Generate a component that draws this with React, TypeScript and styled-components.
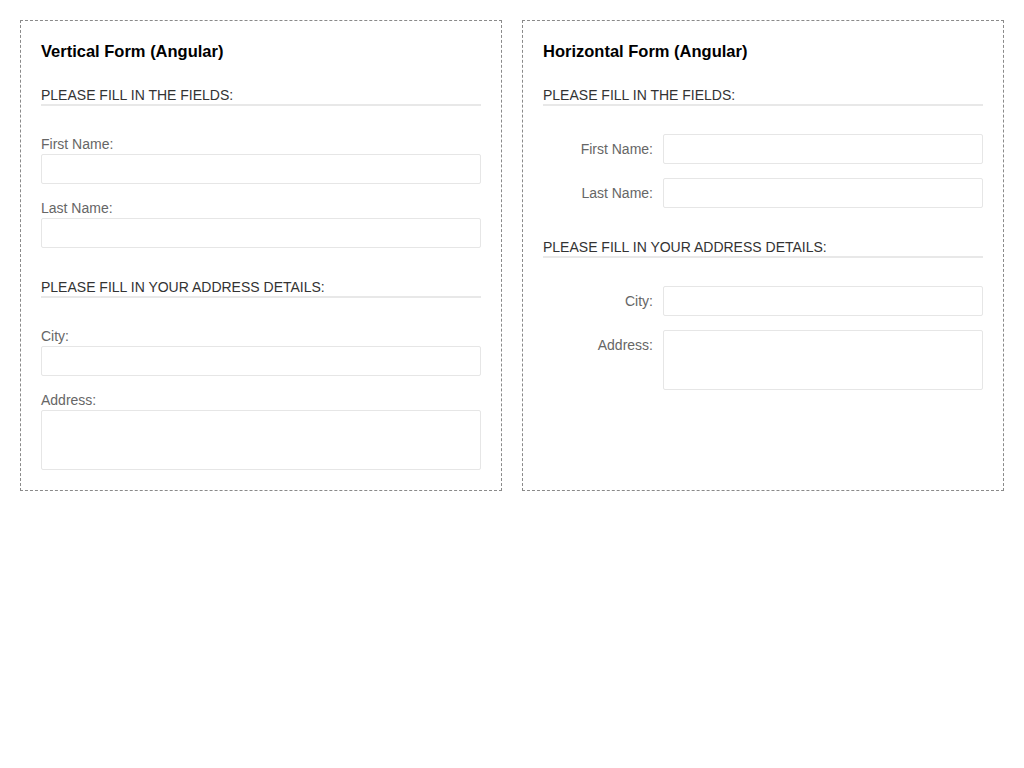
import React from "react";
import styled, { createGlobalStyle } from "styled-components";

const Global = createGlobalStyle`
  html, body { margin: 0; padding: 0; background: #fff; }
  body { font-family: "Liberation Sans", Arial, sans-serif; }
  * { box-sizing: border-box; }
`;

const Page = styled.div`
  display: flex;
  gap: 20px;
  padding: 20px;
  align-items: stretch;
`;

const Panel = styled.section`
  flex: 1 1 0;
  border: 1px dashed #8a8a8a;
  padding: 20px;
`;

const Title = styled.h3`
  margin: 0 0 25px;
  font-size: 16.5px;
  line-height: 20px;
  font-weight: bold;
  color: #000;
`;

const SectionHead = styled.div<{ $first?: boolean }>`
  margin-top: ${(p) => (p.$first ? "0" : "30px")};
  font-size: 14px;
  line-height: 18px;
  color: #333;
  border-bottom: 2px solid #e8e8e8;
`;

const Fields = styled.div<{ $horizontal?: boolean }>`
  margin-top: ${(p) => (p.$horizontal ? "28px" : "29px")};
  display: flex;
  flex-direction: column;
  gap: ${(p) => (p.$horizontal ? "14px" : "15px")};
`;

const Group = styled.div<{ $horizontal?: boolean }>`
  display: flex;
  flex-direction: ${(p) => (p.$horizontal ? "row" : "column")};
  gap: ${(p) => (p.$horizontal ? "10px" : "0")};
  align-items: ${(p) => (p.$horizontal ? "flex-start" : "stretch")};
`;

const Label = styled.label<{ $horizontal?: boolean }>`
  font-size: 14px;
  color: #666;
  line-height: ${(p) => (p.$horizontal ? "30px" : "19px")};
  flex: ${(p) => (p.$horizontal ? "0 0 110px" : "none")};
  text-align: ${(p) => (p.$horizontal ? "right" : "left")};
`;

const Input = styled.input`
  display: block;
  width: 100%;
  min-width: 0;
  flex: 1 1 auto;
  height: 30px;
  border: 1px solid #e6e6e6;
  border-radius: 2px;
  padding: 4px 8px;
  font: 14px "Liberation Sans", Arial, sans-serif;
  outline: none;
  background: #fff;
`;

const TextArea = styled.textarea`
  display: block;
  width: 100%;
  min-width: 0;
  flex: 1 1 auto;
  height: 60px;
  border: 1px solid #e6e6e6;
  border-radius: 2px;
  padding: 4px 8px;
  font: 14px "Liberation Sans", Arial, sans-serif;
  resize: none;
  outline: none;
  background: #fff;
`;

const Field: React.FC<{ label: string; horizontal?: boolean; multiline?: boolean }> = ({
  label,
  horizontal,
  multiline,
}) => (
  <Group $horizontal={horizontal}>
    <Label $horizontal={horizontal}>{label}</Label>
    {multiline ? <TextArea /> : <Input type="text" />}
  </Group>
);

const Form: React.FC<{ title: string; horizontal?: boolean }> = ({ title, horizontal }) => (
  <Panel>
    <Title>{title}</Title>
    <SectionHead $first>PLEASE FILL IN THE FIELDS:</SectionHead>
    <Fields $horizontal={horizontal}>
      <Field label="First Name:" horizontal={horizontal} />
      <Field label="Last Name:" horizontal={horizontal} />
    </Fields>
    <SectionHead>PLEASE FILL IN YOUR ADDRESS DETAILS:</SectionHead>
    <Fields $horizontal={horizontal}>
      <Field label="City:" horizontal={horizontal} />
      <Field label="Address:" horizontal={horizontal} multiline />
    </Fields>
  </Panel>
);

export default function App() {
  return (
    <>
      <Global />
      <Page>
        <Form title="Vertical Form (Angular)" />
        <Form title="Horizontal Form (Angular)" horizontal />
      </Page>
    </>
  );
}
